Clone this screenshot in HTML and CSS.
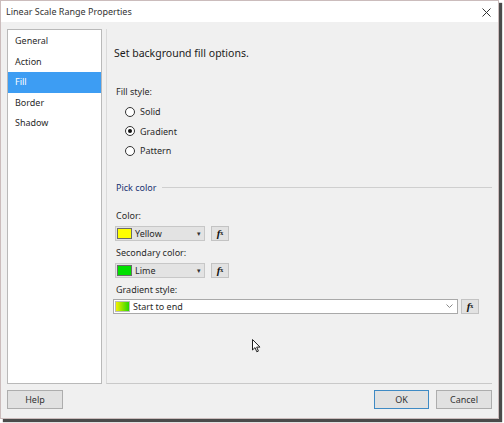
FILE: index.html
```html
<!DOCTYPE html>
<html>
<head>
<meta charset="utf-8">
<link rel="stylesheet" href="styles.css">
</head>
<body>
<div class="dialog">
  <div class="titlebar">
    <span class="title">Linear Scale Range Properties</span>
    <svg class="close" width="9" height="9" viewBox="0 0 9 9"><path d="M0.5 0.5L8.5 8.5M8.5 0.5L0.5 8.5" stroke="#333" stroke-width="1"/></svg>
  </div>
  <div class="body">
    <div class="main">
      <ul class="nav">
        <li>General</li>
        <li>Action</li>
        <li class="sel">Fill</li>
        <li>Border</li>
        <li>Shadow</li>
      </ul>
      <div class="panel">
        <div class="heading">Set background fill options.</div>
        <div class="label first">Fill style:</div>
        <div class="radios">
          <div class="radio"><span class="dot"></span>Solid</div>
          <div class="radio"><span class="dot on"></span>Gradient</div>
          <div class="radio"><span class="dot"></span>Pattern</div>
        </div>
        <div class="section"><span>Pick color</span><span class="rule"></span></div>
        <div class="label l-color">Color:</div>
        <div class="row">
          <div class="combo"><span class="swatch yellow"></span><span class="ctext">Yellow</span><span class="arrow">&#9662;</span></div>
          <div class="fx"><i>f</i><sub>x</sub></div>
        </div>
        <div class="label l-next">Secondary color:</div>
        <div class="row">
          <div class="combo"><span class="swatch lime"></span><span class="ctext">Lime</span><span class="arrow">&#9662;</span></div>
          <div class="fx"><i>f</i><sub>x</sub></div>
        </div>
        <div class="label l-next">Gradient style:</div>
        <div class="row wide">
          <div class="combo white"><span class="swatch grad"></span><span class="ctext">Start to end</span>
            <svg class="chev" width="7" height="4" viewBox="0 0 7 4"><path d="M0.5 0.5L3.5 3.5L6.5 0.5" fill="none" stroke="#888" stroke-width="1"/></svg>
          </div>
          <div class="fx"><i>f</i><sub>x</sub></div>
        </div>
      </div>
    </div>
    <div class="footer">
      <button class="btn">Help</button>
      <span class="spacer"></span>
      <button class="btn ok">OK</button>
      <button class="btn">Cancel</button>
    </div>
  </div>
</div>
<svg class="cursor" width="9" height="14" viewBox="0 0 9 14"><path d="M0.5 0.5L0.5 11L3 8.6L4.8 12.8L6.4 12.1L4.7 8.1L8 8.1Z" fill="#fff" stroke="#222" stroke-width="1"/></svg>
</body>
</html>
```
FILE: styles.css
```css
* { box-sizing: border-box; }
html, body { margin: 0; padding: 0; background: #fff; }
body {
  width: 504px;
  height: 423px;
  position: relative;
  font-family: "Noto Sans", "Open Sans", sans-serif;
  color: #2a2a2a;
}
.dialog {
  width: 499px;
  height: 419px;
  border: 1px solid #cbbcbc;
  background: #f0f0f0;
  display: flex;
  flex-direction: column;
  box-shadow: 3px 3px 1px #4a4a4a;
}
.titlebar {
  height: 21px;
  background: #fff;
  display: flex;
  align-items: center;
  padding: 0 7px 0 5px;
  flex: none;
}
.title { font-size: 9px; flex: 1; color: #333; }
.close { display: block; margin-top: 1px; }
.body {
  flex: 1;
  display: flex;
  flex-direction: column;
  padding: 7px 6px 0 6px;
}
.main { display: flex; height: 355px; gap: 4px; }
.nav {
  list-style: none;
  margin: 0;
  padding: 1px 0 0 0;
  width: 95px;
  background: #fff;
  border: 1px solid #b9b9b9;
  font-size: 9px;
}
.nav li {
  height: 20.5px;
  line-height: 20.5px;
  padding-left: 7px;
}
.nav li.sel { background: #3d9df3; color: #fff; }
.panel {
  flex: 1;
  border-left: 1px solid #dadada;
  border-bottom: 1px solid #c9c9c9;
  padding: 17px 0 0 8px;
  font-size: 9px;
}
.heading { font-size: 10.5px; line-height: 14px; margin-left: -1px; color: #1a1a1a; }
.label { line-height: 12px; margin-left: 1px; }
.label.first { margin-top: 26px; }
.radios { margin-top: 4px; padding-left: 10px; }
.radio { height: 19.5px; display: flex; align-items: center; }
.dot {
  width: 10px; height: 10px;
  border: 1px solid #333;
  border-radius: 50%;
  background: #fff;
  margin-right: 5px;
  position: relative;
}
.dot.on::after {
  content: "";
  position: absolute;
  left: 2px; top: 2px;
  width: 4px; height: 4px;
  border-radius: 50%;
  background: #111;
}
.section {
  margin-top: 21px;
  display: flex;
  align-items: center;
  line-height: 12px;
  color: #173270;
  margin-left: 1px;
}
.rule { flex: 1; height: 1px; background: #cfcfcf; margin-left: 6px; }
.l-color { margin-top: 16px; }
.l-next { margin-top: 6px; }
.row { display: flex; gap: 6px; margin-top: 4px; height: 15px; }
.row.wide { margin-top: 3px; margin-left: -2px; padding-right: 13px; gap: 3px; }
.combo {
  width: 90px;
  height: 15px;
  background: #e3e3e3;
  border: 1px solid #c7c7c7;
  display: flex;
  align-items: center;
  padding-left: 1px;
  position: relative;
}
.row.wide .combo { flex: 1; background: #fff; border-color: #a9a9a9; }
.swatch { width: 15px; height: 11px; border: 1px solid #6a6a6a; flex: none; }
.yellow { background: #ffff00; }
.lime { background: #00e000; }
.grad { background: linear-gradient(90deg, #f4f000, #28d800); border-color: #bbb; }
.ctext { margin-left: 3px; flex: 1; }
.arrow { font-size: 7px; margin-right: 3px; color: #333; }
.chev { margin-right: 4px; }
.fx {
  width: 18px; height: 15px;
  background: #e2e2e2;
  border: 1px solid #c3c3c3;
  font-family: "Liberation Serif", serif;
  font-weight: bold;
  font-size: 11px;
  display: flex;
  align-items: center;
  justify-content: center;
  line-height: 1;
  color: #111;
}
.fx sub { font-size: 6px; vertical-align: -1px; }
.footer { display: flex; margin-top: 6px; gap: 7px; }
.spacer { flex: 1; }
.btn {
  width: 56px; height: 19px;
  background: #e1e1e1;
  border: 1px solid #adadad;
  font-family: "Noto Sans", sans-serif;
  font-size: 9px;
  color: #333;
  padding: 0;
}
.btn.ok { border-color: #3f8ac4; width: 55px; }
.cursor { position: absolute; left: 252px; top: 339px; }
```
